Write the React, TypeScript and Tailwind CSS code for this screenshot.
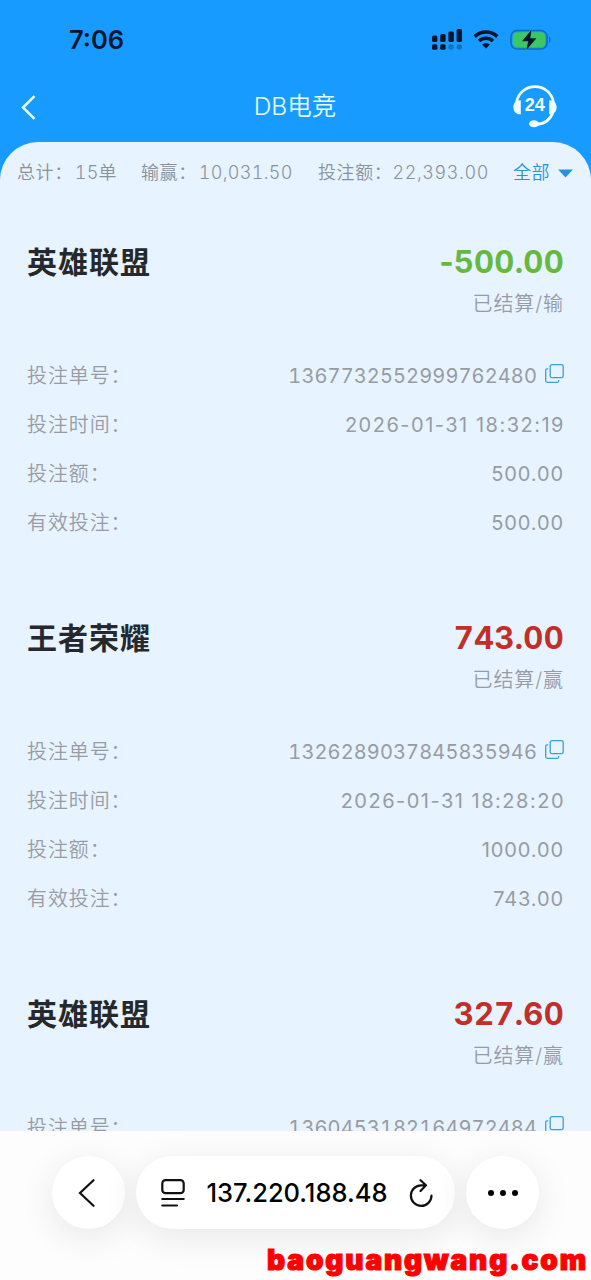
import clsx from "clsx";

type Bet = {
  game: string;
  amount: string;
  status: string;
  win: boolean;
  orderNo: string;
  time?: string;
  stake?: string;
  valid?: string;
};

const bets: Bet[] = [
  {
    game: "英雄联盟",
    amount: "500.00",
    status: "已结算/输",
    win: false,
    orderNo: "1367732552999762480",
    time: "2026-01-31 18:32:19",
    stake: "500.00",
    valid: "500.00",
  },
  {
    game: "王者荣耀",
    amount: "743.00",
    status: "已结算/赢",
    win: true,
    orderNo: "1326289037845835946",
    time: "2026-01-31 18:28:20",
    stake: "1000.00",
    valid: "743.00",
  },
  {
    game: "英雄联盟",
    amount: "327.60",
    status: "已结算/赢",
    win: true,
    orderNo: "1360453182164972484",
  },
];

const SignalIcon = () => (
  <svg width="31" height="22" viewBox="0 0 31 22" fill="#03142e">
    <rect x="0" y="6.5" width="5.4" height="6.5" rx="1.5" />
    <rect x="8.2" y="5" width="5.4" height="8" rx="1.5" />
    <rect x="16.4" y="2.5" width="5.4" height="10.5" rx="1.5" />
    <rect x="24.6" y="0" width="5.4" height="13" rx="1.5" />
    <rect x="0" y="15.3" width="5.4" height="5.5" rx="1.5" />
    <rect x="8.2" y="15.3" width="5.4" height="5.5" rx="1.5" />
    <circle cx="19.1" cy="18" r="2.7" opacity="0.3" />
    <circle cx="27.3" cy="18" r="2.7" opacity="0.3" />
  </svg>
);

const WifiIcon = () => (
  <svg width="26" height="19" viewBox="0 0 26 19" fill="none" stroke="#03142e">
    <path d="M1.7 6.6a16.2 16.2 0 0 1 22.6 0" strokeWidth="3.6" />
    <path d="M6 11a10.2 10.2 0 0 1 14 0" strokeWidth="3.4" />
    <path d="M13 18.6l-3.9-4a5.7 5.7 0 0 1 7.8 0z" fill="#03142e" stroke="none" />
  </svg>
);

const BatteryIcon = () => (
  <svg width="42" height="22" viewBox="0 0 42 22">
    <rect x="1" y="1.5" width="36" height="18.5" rx="6" fill="none" stroke="#0f6dbf" strokeWidth="1.6" />
    <rect x="2.8" y="3.2" width="32.4" height="15.1" rx="4.2" fill="#3cc763" />
    <path d="M39 7.6c2.4.9 2.4 5.4 0 6.3z" fill="#0f6dbf" />
    <path
      d="M21.7.6L12 12.3h6.2L16.4 20.9 26.4 9.2h-6.2z"
      fill="#03142e"
      stroke="#3cc763"
      strokeWidth="1"
      paintOrder="stroke"
      strokeLinejoin="round"
    />
  </svg>
);

const ServiceIcon = () => (
  <svg width="44" height="44" viewBox="0 0 44 44" fill="none">
    <path
      d="M3.5 17C5.5 7.5 13 1.6 22 1.6S38.5 7.5 40.5 17M40 27C37.500 34.500 31.500 39 23 39.300"
      stroke="#f0fdff"
      strokeWidth="2.7"
    />
    <path d="M7.8 15.2v14C3 29.6.4 26.3.4 22.2s2.6-7.4 7.4-7z" fill="#f0fdff" />
    <path d="M36.2 15.2v14c4.8.4 7.4-2.9 7.4-7s-2.6-7.4-7.4-7z" fill="#f0fdff" />
    <ellipse cx="21" cy="38.8" rx="5" ry="3.5" fill="#f0fdff" />
    <text
      x="21.8"
      y="26.3"
      textAnchor="middle"
      fontFamily="Liberation Sans, sans-serif"
      fontSize="18"
      fontWeight="700"
      fill="#f0fdff"
    >
      24
    </text>
  </svg>
);

const CopyIcon = () => (
  <svg className="mb-1" width="19" height="19" viewBox="0 0 19 19" fill="none" stroke="#3d9fd3" strokeWidth="1.3">
    <rect x="5.2" y=".7" width="13" height="13" rx="1.8" />
    <path d="M3.2 4.8H2.2A1.5 1.5 0 0 0 .7 6.3V16.8a1.5 1.5 0 0 0 1.5 1.5H12.2a1.5 1.5 0 0 0 1.5-1.5V16" />
  </svg>
);

const StatusBar = () => (
  <div className="flex h-[70px] items-center justify-between pt-2.5 pr-[39px] pl-[69px]">
    <span className="text-[25.5px] font-semibold text-[#03142e]">7:06</span>
    <div className="flex items-center pb-px">
      <SignalIcon />
      <div className="mr-[11px] ml-[10px]">
        <WifiIcon />
      </div>
      <BatteryIcon />
    </div>
  </div>
);

const Header = () => (
  <div className="flex h-[72px] items-center justify-between pt-0.5 pr-[34px] pl-[21px]">
    <button>
      <svg width="15" height="25" viewBox="0 0 15 25" fill="none" stroke="#e9fcff" strokeWidth="2.5">
        <path d="M13.5 1.2L2 12.5l11.5 11.3" />
      </svg>
    </button>
    <h1 className="pb-0.5 pl-[41px] text-[24.5px] font-[350] whitespace-nowrap text-[#e9fcff]">DB电竞</h1>
    <button>
      <ServiceIcon />
    </button>
  </div>
);

const Summary = () => (
  <div className="flex h-[60px] shrink-0 items-center pt-0.5 pl-[17px] text-lg font-[350] tracking-[0.6px] whitespace-nowrap text-[#8b919b] tabular-nums">
    <span className="w-[124px]">
      总计：<span className="ml-0.5 tracking-[0.2px]">15</span>单
    </span>
    <span className="w-[177px]">
      输赢：<span className="ml-0.5 tracking-[0.3px]">10,031.50</span>
    </span>
    <span className="w-[195px]">投注额：22,393.00</span>
    <button className="flex items-center gap-2 text-[#2793d8]">
      全部
      <svg width="15" height="9" viewBox="0 0 15 9" fill="#2793d8">
        <path d="M0 .5h15L7.5 8.5z" />
      </svg>
    </button>
  </div>
);

const Row = ({ label, value, valueClass }: { label: string; value?: string; valueClass?: string }) => (
  <div className="flex h-[49.2px] items-center justify-between">
    <span className="font-[350]">{label}：</span>
    <span className={clsx("flex items-center gap-2", valueClass)}>
      {value}
      {label === "投注单号" && <CopyIcon />}
    </span>
  </div>
);

const BetCard = ({ bet }: { bet: Bet }) => (
  <div className="h-[376px] shrink-0 px-[27px] pt-10 text-xl tracking-[0.9px] text-[#979ba3]">
    <div className="flex h-10 items-center justify-between">
      <h2 className="text-[30px] font-bold tracking-[1px] text-[#25282c]">{bet.game}</h2>
      <span
        className={clsx(
          "text-[31px] font-bold tracking-[0.3px] tabular-nums",
          bet.win ? "text-[#c03028]" : "text-[#65b93f]"
        )}
      >
        {!bet.win && <span className="tracking-normal normal-nums">-</span>}
        {bet.amount}
      </span>
    </div>
    <div className="mt-[10px] mb-[35px] flex h-6 items-center justify-end font-[350]">{bet.status}</div>
    <Row label="投注单号" value={bet.orderNo} valueClass="tracking-[0.12px] tabular-nums" />
    <Row label="投注时间" value={bet.time} valueClass="tracking-[1.5px] -mr-px" />
    <Row label="投注额" value={bet.stake} />
    <Row label="有效投注" value={bet.valid} />
  </div>
);

const BrowserBar = () => (
  <div className="relative flex h-[149px] justify-center gap-[11px] bg-[#fdfdfd] pt-[25px]">
    <button className="flex size-[73px] items-center justify-center rounded-full bg-white pr-1 shadow-[0_8px_36px_rgba(0,0,0,0.09)]">
      <svg width="17" height="28" viewBox="0 0 17 28" fill="none" stroke="#111" strokeWidth="2.2" strokeLinecap="round">
        <path d="M15.5 1.2L2 14l13.5 12.8" />
      </svg>
    </button>
    <div className="flex h-[73px] w-[319px] items-center justify-between rounded-full bg-white pr-[22px] pl-[25px] shadow-[0_8px_36px_rgba(0,0,0,0.09)]">
      <svg width="24" height="28" viewBox="0 0 24 28" fill="none" stroke="#111" strokeWidth="2.2" strokeLinecap="round">
        <rect x="1.3" y="1.2" width="21.4" height="13" rx="3.2" />
        <path d="M1.3 20h21.4M1.3 26.5h14.7" />
      </svg>
      <span className="pt-0.5 text-[25.5px] font-medium text-black">137.220.188.48</span>
      <svg
        width="24"
        height="28"
        viewBox="0 0 24 28"
        fill="none"
        stroke="#111"
        strokeWidth="2.2"
        strokeLinecap="round"
        strokeLinejoin="round"
      >
        <path d="M17 6.3H12.500A10.300 10.300 0 1 0 22.500 16.500M11.500 1.200l5.500 5.100-5.500 5.700" />
      </svg>
    </div>
    <button className="flex size-[73px] items-center justify-center gap-1.5 rounded-full bg-white shadow-[0_8px_36px_rgba(0,0,0,0.09)]">
      <i className="size-1.5 rounded-full bg-black" />
      <i className="size-1.5 rounded-full bg-black" />
      <i className="size-1.5 rounded-full bg-black" />
    </button>
    <span className="absolute right-[3px] bottom-0 text-[28px] leading-[40px] font-black tracking-[1.9px] text-[#ff0000] [-webkit-text-stroke:1.2px_#ff0000]">
      baoguangwang.com
    </span>
  </div>
);

export default function App() {
  return (
    <div
      lang="zh-CN"
      className="flex h-[1280px] w-[591px] flex-col overflow-hidden bg-[#189bff] font-['Inter','Noto_Sans_CJK_SC',sans-serif]"
    >
      <StatusBar />
      <Header />
      <main className="flex h-[989px] flex-col overflow-hidden rounded-t-[38px] bg-[#e7f4ff]">
        <Summary />
        {bets.map((bet) => (
          <BetCard key={bet.orderNo} bet={bet} />
        ))}
      </main>
      <BrowserBar />
    </div>
  );
}
